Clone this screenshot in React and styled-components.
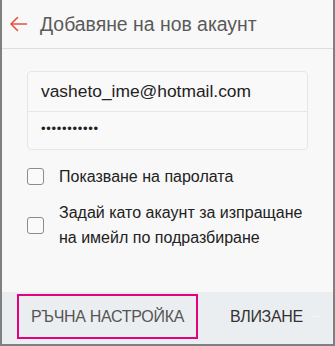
import React from "react";
import styled, { createGlobalStyle } from "styled-components";

const Global = createGlobalStyle`
  html, body { margin: 0; padding: 0; background: #f8f8f8; }
  * { box-sizing: border-box; }
`;

const Screen = styled.div`
  width: 335px;
  height: 346px;
  background: #f8f8f8;
  border: 2px solid #808080;
  border-top: none;
  display: flex;
  flex-direction: column;
  font-family: "Liberation Sans", Arial, sans-serif;
  overflow: hidden;
`;

const Header = styled.div`
  height: 49px;
  flex: none;
  display: flex;
  align-items: center;
  border-bottom: 1px solid #dedede;
  padding-left: 7px;
  gap: 12px;
`;

const Title = styled.div`
  font-size: 19.4px;
  color: #5a5a5a;
`;

const Body = styled.div`
  flex: 1;
  padding: 22px 25px 0 25px;
  display: flex;
  flex-direction: column;
`;

const InputGroup = styled.div`
  border: 1px solid #e6e6e6;
  border-radius: 4px;
  background: #f9f9f9;
  display: flex;
  flex-direction: column;
`;

const Field = styled.div`
  height: ${(p) => p.$h}px;
  display: flex;
  align-items: center;
  padding-left: 13px;
  font-size: 17.4px;
  color: #222;
  border-top: ${(p) => (p.$divider ? "1px solid #e6e6e6" : "none")};
`;

const Dots = styled.span`
  font-size: 13px;
  letter-spacing: 0.7px;
  position: relative;
  top: -2px;
`;

const CheckRow = styled.div`
  display: flex;
  align-items: center;
  gap: 15px;
  margin-top: ${(p) => p.$mt}px;
`;

const Box = styled.div`
  width: 17px;
  height: 17px;
  flex: none;
  border: 1.5px solid #8c8c8c;
  border-radius: 3px;
  background: #fafafa;
`;

const Label = styled.div`
  font-size: 16px;
  color: #222;
  line-height: 25px;
  white-space: nowrap;
`;

const BottomBar = styled.div`
  height: 52px;
  flex: none;
  background: #ebeef0;
  display: flex;
  align-items: center;
  padding-left: 15px;
  padding-bottom: 3px;
`;

const ButtonText = styled.div`
  font-size: 16px;
  color: ${(p) => (p.$dark ? "#333" : "#555")};
  letter-spacing: -0.3px;
`;

const Highlight = styled.div`
  width: 181px;
  height: 45px;
  border: 2.5px solid #e5007e;
  display: flex;
  align-items: center;
  justify-content: center;
`;

const Second = styled.div`
  margin-left: 32px;
  display: flex;
  align-items: center;
  gap: 8px;
`;

const Dash = styled.div`
  width: 9px;
  height: 1px;
  background: #f6f7f8;
`;

export default function App() {
  return (
    <>
      <Global />
      <Screen>
        <Header>
          <svg width="19" height="16" viewBox="0 0 19 16" fill="none">
            <path
              d="M17.5 8H2 M8.5 1.5L2 8l6.5 6.5"
              stroke="#e8523f"
              strokeWidth="1.6"
              strokeLinecap="round"
              strokeLinejoin="round"
            />
          </svg>
          <Title>Добавяне на нов акаунт</Title>
        </Header>
        <Body>
          <InputGroup>
            <Field $h={39}>vasheto_ime@hotmail.com</Field>
            <Field $h={38} $divider>
              <Dots>•••••••••••</Dots>
            </Field>
          </InputGroup>
          <CheckRow $mt={14}>
            <Box />
            <Label>Показване на паролата</Label>
          </CheckRow>
          <CheckRow $mt={11}>
            <Box />
            <Label>
              Задай като акаунт за изпращане
              <br />
              на имейл по подразбиране
            </Label>
          </CheckRow>
        </Body>
        <BottomBar>
          <Highlight>
            <ButtonText>РЪЧНА НАСТРОЙКА</ButtonText>
          </Highlight>
          <Second>
            <ButtonText $dark>ВЛИЗАНЕ</ButtonText>
            <Dash />
          </Second>
        </BottomBar>
      </Screen>
    </>
  );
}
